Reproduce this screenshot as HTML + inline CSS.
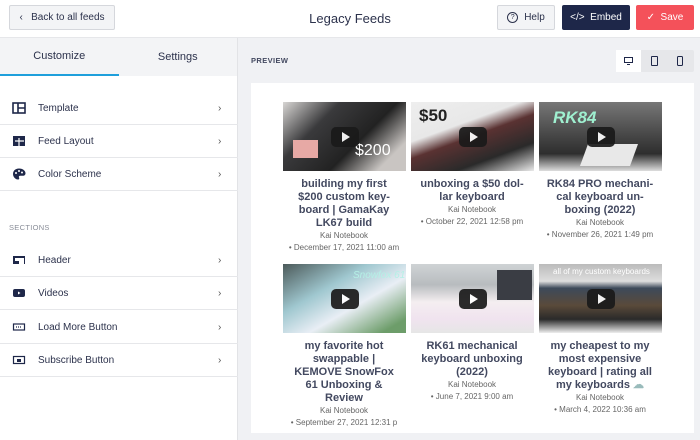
<!DOCTYPE html>
<html><head><meta charset="utf-8"><style>
*{margin:0;padding:0;box-sizing:border-box}
body{width:700px;height:440px;overflow:hidden;font-family:"Liberation Sans",sans-serif;background:#f0f1f4;position:relative;color:#2c324c}
.top{position:absolute;left:0;top:0;width:700px;height:38px;background:#fff;border-bottom:1px solid #e6e7ea}
.btn{position:absolute;top:5px;height:25px;font-size:10px;display:flex;align-items:center;justify-content:center;border-radius:2px}
.side{position:absolute;left:0;top:38px;width:238px;height:402px;background:#fff;border-right:1px solid #e2e3e6}
.tabs{height:38px;background:#f3f4f6;display:flex;font-size:11px;color:#2c324c}
.tabs div{flex:1;display:flex;align-items:center;justify-content:center}
.row{position:absolute;left:0;width:238px;height:33px;border-bottom:1px solid #e6e7ea;font-size:10px;color:#2c324c;display:flex;align-items:center}
.row .ic{position:absolute;left:12px;width:14px;height:12px}
.row span{position:absolute;left:38px}
.row b{position:absolute;left:218px;font-weight:normal;font-size:10px;color:#555}
.card{position:absolute;left:251px;top:83px;width:443px;height:350px;background:#fff}
.th{position:absolute;width:123px;height:69px;overflow:hidden}
.play{position:absolute;left:50%;top:50%;width:28px;height:20px;margin:-10px 0 0 -14px;background:#1a1a1a;border-radius:5px;opacity:.92}
.play:after{content:"";position:absolute;left:11px;top:5px;border-left:8px solid #fff;border-top:5px solid transparent;border-bottom:5px solid transparent}
.tx{position:absolute;width:140px;text-align:center;font-size:9.5px;line-height:13px;color:#434960}
.tx b{display:block;font-size:11px;font-weight:bold}
.tx i{font-style:normal;display:block;font-size:8px;line-height:12px;color:#666;white-space:nowrap}
</style></head><body>
<div class="top">
 <div class="btn" style="left:9px;width:106px;background:#f3f4f6;border:1px solid #d5d7dc;color:#2c324c">‹&nbsp;&nbsp; Back to all feeds</div>
 <div style="position:absolute;left:0;width:700px;top:11px;text-align:center;font-size:13px;color:#2c324c">Legacy Feeds</div>
 <div class="btn" style="left:497px;width:58px;background:#f3f4f6;border:1px solid #d5d7dc;color:#2c324c"><span style="display:inline-block;width:11px;height:11px;border:1.3px solid #2c324c;border-radius:50%;font-size:7px;line-height:9px;text-align:center;margin-right:6px">?</span>Help</div>
 <div class="btn" style="left:562px;width:68px;background:#1e2749;color:#fff">&lt;/&gt;&nbsp; Embed</div>
 <div class="btn" style="left:636px;width:58px;background:#f4515a;color:#fff">✓&nbsp; Save</div>
</div>
<div class="side">
 <div class="tabs"><div style="border-bottom:2px solid #1e9fdb">Customize</div><div>Settings</div></div>
 <div class="row" style="top:54px"><svg class="ic" viewBox="0 0 14 12"><rect x="1" y="1" width="12" height="10" fill="none" stroke="#1e2749" stroke-width="1.6"/><path d="M6 1v10M6 6h7" stroke="#1e2749" stroke-width="1.6"/></svg><span>Template</span><b>›</b></div>
 <div class="row" style="top:87px"><svg class="ic" viewBox="0 0 14 12"><rect x="1" y="1" width="12" height="10" fill="#1e2749"/><path d="M7 3v8M3 6h9" stroke="#fff" stroke-width="1.2"/></svg><span>Feed Layout</span><b>›</b></div>
 <div class="row" style="top:120px"><svg class="ic" viewBox="0 0 14 12"><path d="M7 0.5C3 0.5 1 3 1 6s2.5 5.5 5 5.5c1.3 0 1.5-1 1-2-.5-1 .2-1.8 1.3-1.8H11c1.5 0 2.5-1 2.5-2.5C13.5 3 11 .5 7 .5z" fill="#1e2749"/><circle cx="4" cy="5" r="1" fill="#fff"/><circle cx="7" cy="3" r="1" fill="#fff"/><circle cx="10" cy="4.5" r="1" fill="#fff"/></svg><span>Color Scheme</span><b>›</b></div>
 <div style="position:absolute;left:9px;top:185px;font-size:7.5px;color:#8a8e99;letter-spacing:.3px">SECTIONS</div>
 <div class="row" style="top:206px"><svg class="ic" viewBox="0 0 14 12"><rect x="1" y="2" width="12" height="8" fill="#1e2749"/><rect x="3" y="4" width="9" height="6" fill="#fff"/><rect x="3" y="7" width="4" height="3" fill="#1e2749"/></svg><span>Header</span><b>›</b></div>
 <div class="row" style="top:239px"><svg class="ic" viewBox="0 0 14 12"><rect x="1" y="2" width="12" height="8" rx="2" fill="#1e2749"/><path d="M6 4.5v3l2.5-1.5z" fill="#fff"/></svg><span>Videos</span><b>›</b></div>
 <div class="row" style="top:273px"><svg class="ic" viewBox="0 0 14 12"><rect x="1.5" y="3" width="11" height="6" fill="none" stroke="#1e2749" stroke-width="1.2"/><path d="M4 6h6" stroke="#1e2749" stroke-width="1.2" stroke-dasharray="1 1"/></svg><span>Load More Button</span><b>›</b></div>
 <div class="row" style="top:306px"><svg class="ic" viewBox="0 0 14 12"><rect x="1.5" y="2.5" width="11" height="7" fill="none" stroke="#1e2749" stroke-width="1.2"/><rect x="5" y="5" width="4" height="3" fill="#1e2749"/></svg><span>Subscribe Button</span><b>›</b></div>
</div>
<div style="position:absolute;left:251px;top:56px;font-size:7.5px;font-weight:bold;color:#434960;letter-spacing:.4px">PREVIEW</div>
<div style="position:absolute;left:616px;top:50px;width:78px;height:22px;background:#e6e7ea;border-radius:2px">
 <div style="position:absolute;left:0;top:0;width:25px;height:22px;background:#fff"></div>
 <div style="position:absolute;left:8px;top:7px;width:9px;height:6px;border:1.2px solid #1e2749"></div><div style="position:absolute;left:11px;top:14px;width:3px;height:1.3px;background:#1e2749"></div>
 <div style="position:absolute;left:35px;top:6px;width:7px;height:10px;border:1.3px solid #1e2749;border-radius:1px"></div>
 <div style="position:absolute;left:61px;top:6px;width:6px;height:10px;border:1.3px solid #1e2749;border-radius:1.5px"></div>
</div>
<div class="card"></div>
<div class="th" style="left:283px;top:102px;background:linear-gradient(135deg,#d8d6d4 0%,#3a3a3c 30%,#222 60%,#c9c5c2 85%)"><div style="position:absolute;left:10px;top:38px;width:25px;height:18px;background:#e7a9a5"></div><div style="position:absolute;left:72px;top:40px;color:#fff;font-size:16px">$200</div><div class="play"></div></div>
<div class="th" style="left:411px;top:102px;background:linear-gradient(160deg,#eee 0%,#e8e8e8 35%,#5a3232 50%,#2a2a2a 75%,#eaeaea 100%)"><div style="position:absolute;left:8px;top:4px;font-size:17px;font-weight:bold;color:#222">$50</div><div class="play"></div></div>
<div class="th" style="left:539px;top:102px;background:linear-gradient(180deg,#777 0%,#4a4a4a 45%,#2e2e2e 75%,#ddd 100%)"><div style="position:absolute;left:14px;top:6px;font-size:17px;font-weight:bold;color:#9ff0d0;font-style:italic">RK84</div><div style="position:absolute;left:45px;top:42px;width:50px;height:22px;background:#e8e8e8;transform:skewX(-20deg)"></div><div class="play"></div></div>
<div class="th" style="left:283px;top:264px;background:linear-gradient(150deg,#4c5a5a 0%,#9fc7cf 35%,#e9eef5 60%,#6d9d6a 90%)"><div style="position:absolute;left:70px;top:6px;font-size:10px;color:#b5f0e6;font-style:italic">Snowfox 61</div><div class="play"></div></div>
<div class="th" style="left:411px;top:264px;background:linear-gradient(180deg,#cfd3d5 0%,#b8bcbf 30%,#f4eef0 55%,#f0e3ef 80%,#e6e6e6 100%)"><div style="position:absolute;left:86px;top:6px;width:35px;height:30px;background:#3a3d44"></div><div class="play"></div></div>
<div class="th" style="left:539px;top:264px;background:linear-gradient(180deg,#bbb 0%,#ddd 25%,#3d4a5a 35%,#5a4a3a 60%,#2a2a2a 80%,#eee 100%)"><div style="position:absolute;left:14px;top:3px;font-size:8px;color:#fff">all of my custom keyboards</div><div class="play"></div></div>
<div class="tx" style="left:274px;top:178px"><b>building my first<br>$200 custom key-<br>board | GamaKay<br>LK67 build</b><i>Kai Notebook</i><i>• December 17, 2021 11:00 am</i></div>
<div class="tx" style="left:402px;top:178px"><b>unboxing a $50 dol-<br>lar keyboard</b><i>Kai Notebook</i><i>• October 22, 2021 12:58 pm</i></div>
<div class="tx" style="left:530px;top:178px"><b>RK84 PRO mechani-<br>cal keyboard un-<br>boxing (2022)</b><i>Kai Notebook</i><i>• November 26, 2021 1:49 pm</i></div>
<div class="tx" style="left:274px;top:340px"><b>my favorite hot<br>swappable |<br>KEMOVE SnowFox<br>61 Unboxing &amp;<br>Review</b><i>Kai Notebook</i><i>• September 27, 2021 12:31 p</i></div>
<div class="tx" style="left:402px;top:340px"><b>RK61 mechanical<br>keyboard unboxing<br>(2022)</b><i>Kai Notebook</i><i>• June 7, 2021 9:00 am</i></div>
<div class="tx" style="left:530px;top:340px"><b>my cheapest to my<br>most expensive<br>keyboard | rating all<br>my keyboards <span style="color:#9bb">☁</span></b><i>Kai Notebook</i><i>• March 4, 2022 10:36 am</i></div>
</body></html>
